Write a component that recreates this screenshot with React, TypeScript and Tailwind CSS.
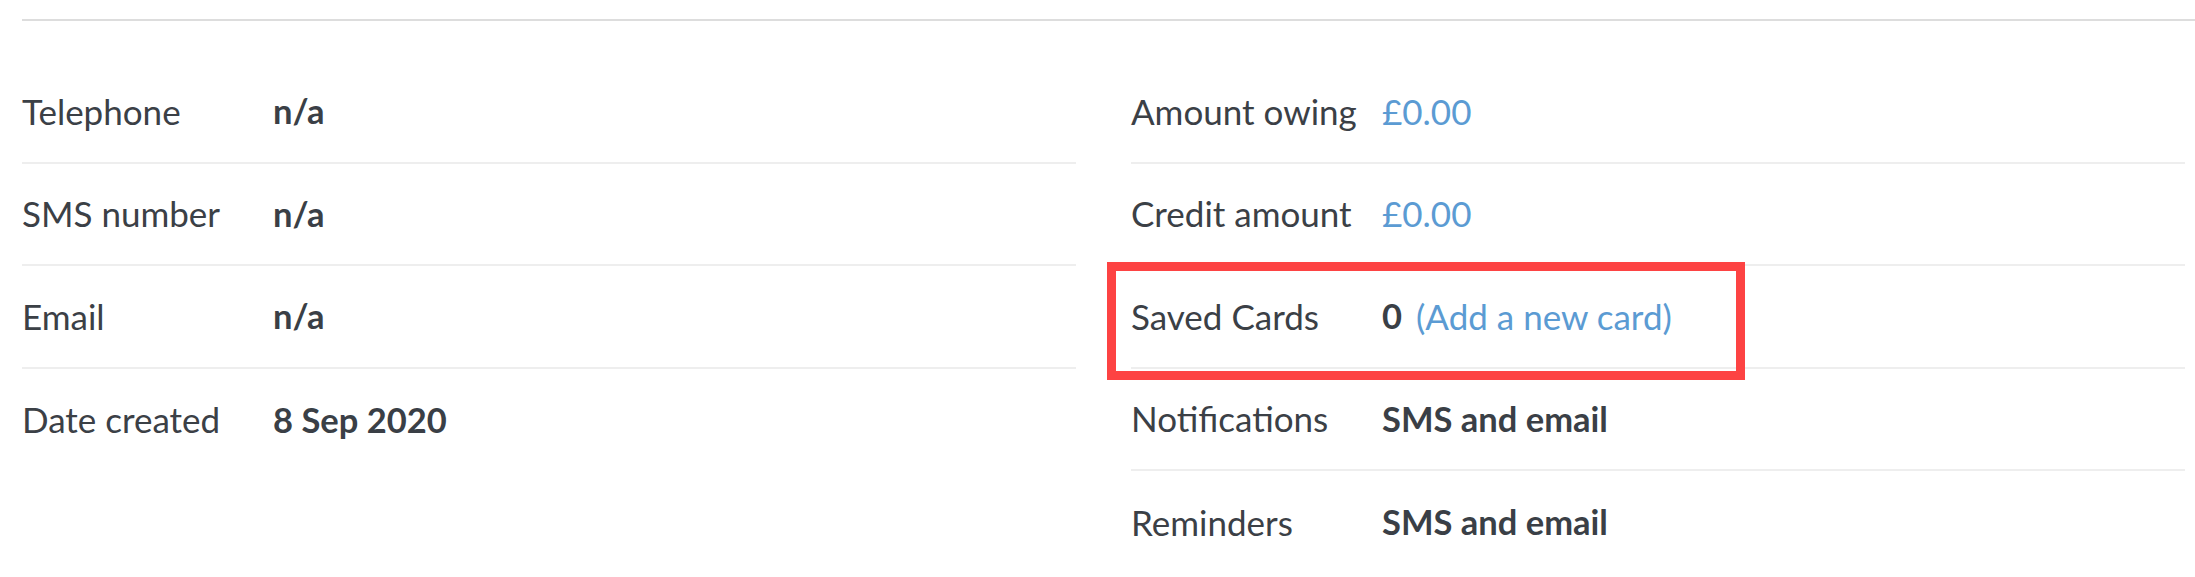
import React from 'react';

interface Field {
  label: string;
  value: React.ReactNode;
  highlight?: boolean;
}

const Value: React.FC<{ children: React.ReactNode }> = ({ children }) => (
  <span className="font-bold text-[34.5px] text-[#3a3f46]">{children}</span>
);

const Link: React.FC<{ children: React.ReactNode }> = ({ children }) => (
  <a className="text-[#5b9bd3] cursor-pointer">{children}</a>
);

const contactFields: Field[] = [
  { label: 'Telephone', value: <Value>n/a</Value> },
  { label: 'SMS number', value: <Value>n/a</Value> },
  { label: 'Email', value: <Value>n/a</Value> },
  { label: 'Date created', value: <Value>8 Sep 2020</Value> },
];

const accountFields: Field[] = [
  { label: 'Amount owing', value: <Link>£0.00</Link> },
  { label: 'Credit amount', value: <Link>£0.00</Link> },
  {
    label: 'Saved Cards',
    value: (
      <>
        <Value>0</Value>
        <span className="ml-[14px]">
          <Link>(Add a new card)</Link>
        </span>
      </>
    ),
    highlight: true,
  },
  { label: 'Notifications', value: <Value>SMS and email</Value> },
  { label: 'Reminders', value: <Value>SMS and email</Value> },
];

const FieldList: React.FC<{ fields: Field[] }> = ({ fields }) => (
  <div className="flex flex-col">
    {fields.map((f, idx) => (
      <div
        key={f.label}
        className={`relative flex items-center h-[102.5px] ${
          idx < fields.length - 1 ? 'border-b-2 border-[#eeeeee]' : ''
        }`}
      >
        <div className="w-[251px] shrink-0 text-[#3b4046]">{f.label}</div>
        <div className="flex items-center">{f.value}</div>
        {f.highlight && (
          <div className="absolute -left-[24px] -top-[4px] w-[638px] h-[118px] border-[9px] border-[#fd4343] pointer-events-none"></div>
        )}
      </div>
    ))}
  </div>
);

const App: React.FC = () => {
  return (
    <div
      className="h-[577px] overflow-hidden bg-white pt-[19px] pl-[22px] text-[35px] leading-none"
      style={{ fontFamily: 'Lato, "Open Sans", sans-serif' }}
    >
      <div className="border-t-2 border-[#dddddd]"></div>
      <div className="grid grid-cols-2 gap-[55px] pr-[10px] mt-[40px]">
        <FieldList fields={contactFields} />
        <FieldList fields={accountFields} />
      </div>
    </div>
  );
};

export default App;
